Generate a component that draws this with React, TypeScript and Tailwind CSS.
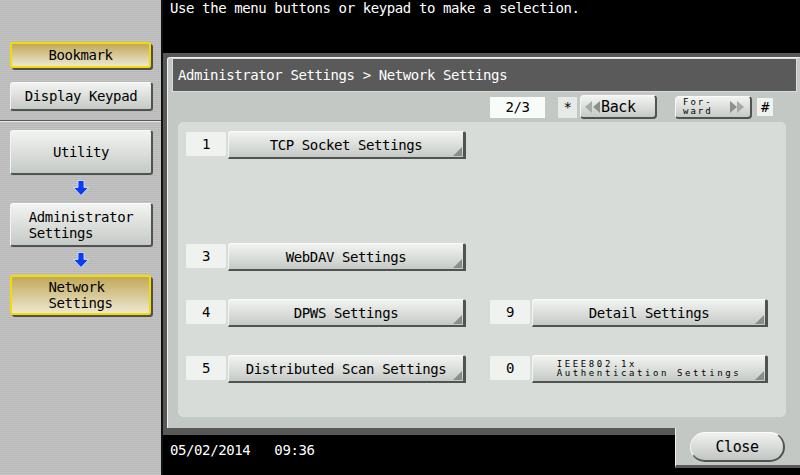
import React from "react";

const F = "font-['DejaVu_Sans_Mono',monospace]";

function DownArrow() {
  return (
    <svg width="16" height="16" viewBox="0 0 16 16">
      <path d="M5 0.5h6v7h4.5L8 15.5 0.5 7.5H5z" fill="#0a3cf0" stroke="#dfe8ff" strokeWidth="0.8" />
    </svg>
  );
}

function Corner() {
  return (
    <svg className="absolute right-[1px] bottom-[1px]" width="9" height="9" viewBox="0 0 9 9">
      <polygon points="9,0 9,9 0,9" fill="#8a8e8a" />
    </svg>
  );
}

const grayBtn =
  "bg-linear-to-b from-[#f2f4f2] to-[#c6cac6] border-t border-l border-t-[#fafafa] border-l-[#f4f4f4] border-r-2 border-b-2 border-r-[#505450] border-b-[#505450]";
const yellowBtn =
  "bg-linear-to-b from-[#c2a858] to-[#ece8d0] border-2 border-[#f4dc00] shadow-[2px_2px_0_#505050]";

function Sidebar() {
  return (
    <div className="w-[163px] h-full flex flex-col border-r-2 border-[#111111] bg-[repeating-linear-gradient(180deg,#c4c4c4_0px,#c4c4c4_1px,#b8b8b8_1px,#b8b8b8_2px)]">
      <div className="pt-[42px] pl-[10px] flex flex-col">
        <div className={`w-[141px] h-[26px] rounded-[3px] flex items-center justify-center ${yellowBtn}`}>Bookmark</div>
        <div className={`mt-[14px] w-[143px] h-[29px] rounded-[3px] flex items-center justify-center ${grayBtn}`}>Display Keypad</div>
      </div>
      <div className="mt-[9px] h-[1px] bg-[#5a5a5a]" />
      <div className="h-[1px] bg-[#e4e4e4]" />
      <div className="pl-[10px] flex flex-col">
        <div className={`mt-[8px] w-[143px] h-[45px] rounded-[3px] flex items-center justify-center ${grayBtn}`}>Utility</div>
        <div className="mt-[5px] w-[141px] h-[16px] flex justify-center"><DownArrow /></div>
        <div className={`mt-[7px] w-[143px] h-[44px] rounded-[3px] flex items-center justify-center ${grayBtn}`}>
          <div className="text-left">Administrator<br />Settings</div>
        </div>
        <div className="mt-[5px] w-[141px] h-[16px] flex justify-center"><DownArrow /></div>
        <div className={`mt-[7px] w-[141px] h-[40px] rounded-[3px] flex items-center justify-center ${yellowBtn}`}>
          <div className="text-left">Network<br />Settings</div>
        </div>
      </div>
    </div>
  );
}

function Item({ n, label, w, small }: { n: string; label?: string; w: number; small?: boolean }) {
  return (
    <div className="flex gap-[2px]" style={{ width: w }}>
      <div className="mt-[1px] w-[40px] h-[24px] rounded-[2px] bg-[#f0f2f0] flex items-center justify-center">{n}</div>
      <div className={`relative flex-1 h-[28px] rounded-tr-[3px] rounded-tl-[2px] flex items-center justify-center ${grayBtn} border-r-[3px]`}>
        {small ? (
          <div className="text-left text-[9px] leading-[9px] tracking-[2.6px]">IEEE802.1x<br />Authentication Settings</div>
        ) : (
          label
        )}
        <Corner />
      </div>
    </div>
  );
}

function Row({ children }: { children?: React.ReactNode }) {
  return <div className="h-[28px] flex gap-[24px]">{children}</div>;
}

export default function App() {
  return (
    <div className={`w-[800px] h-[475px] bg-black flex overflow-hidden text-black ${F} text-[14px] leading-[16px] tracking-[-0.4px]`}>
      <Sidebar />
      <div className="w-[637px] flex flex-col">
        <div className="h-[53px] pl-[7px] text-white">Use the menu buttons or keypad to make a selection.</div>
        <div className="h-[375px] bg-[#585858] pl-[4px] pt-[4px] flex">
          <div className="flex-1 flex flex-col bg-[#c4c8c4] border-t border-l border-[#f2f2f2] rounded-tl-[3px]">
            <div className="ml-[4px] w-[625px] h-[34px] bg-[#5a5a5a] border border-[#dcdcdc] text-white flex items-center pl-[5px]">
              Administrator Settings &gt; Network Settings
            </div>
            <div className="h-[30px] flex items-center justify-end pr-[27px]">
              <div className="w-[55px] h-[21px] bg-[#f8fcf8] flex items-center justify-center mr-[13px]">2/3</div>
              <div className="w-[19px] h-[21px] bg-[#e6eae6] flex items-center justify-center mr-[3px]">*</div>
              <div className={`w-[77px] h-[24px] rounded-[4px] flex items-center pl-[4px] gap-[1px] mr-[18px] ${grayBtn}`}>
                <svg width="15" height="12" viewBox="0 0 15 12">
                  <polygon points="7,0 7,12 0,6" fill="#a4aca4" />
                  <polygon points="15,0 15,12 8,6" fill="#8a928a" />
                </svg>
                <span className="text-[15px]">Back</span>
              </div>
              <div className={`w-[77px] h-[23px] rounded-[4px] flex items-center justify-between pl-[7px] pr-[6px] mr-[5px] ${grayBtn}`}>
                <div className="text-[9px] leading-[9px] tracking-[2px]">For-<br />ward</div>
                <svg width="14" height="12" viewBox="0 0 14 12">
                  <polygon points="0,0 0,12 7,6" fill="#8a928a" />
                  <polygon points="7,0 7,12 14,6" fill="#a4aca4" />
                </svg>
              </div>
              <div className="w-[16px] h-[18px] bg-[#f0f2f0] flex items-center justify-center">#</div>
            </div>
            <div className="ml-[10px] w-[608px] h-[295px] rounded-[5px] bg-[#d8dcd8] pt-[9px] pl-[8px] flex flex-col gap-[28px]">
              <Row><Item n="1" label="TCP Socket Settings" w={280} /></Row>
              <Row />
              <Row><Item n="3" label="WebDAV Settings" w={280} /></Row>
              <Row>
                <Item n="4" label="DPWS Settings" w={280} />
                <Item n="9" label="Detail Settings" w={278} />
              </Row>
              <Row>
                <Item n="5" label="Distributed Scan Settings" w={280} />
                <Item n="0" w={278} small />
              </Row>
            </div>
          </div>
        </div>
        <div className="flex">
          <div className="w-[512px] flex flex-col">
            <div className="h-[7px] bg-[#585858]" />
            <div className="pt-[7px] pl-[7px] text-white whitespace-pre">05/02/2014   09:36</div>
          </div>
          <div className="w-[125px] h-[40px] bg-[#c4c8c4] border-l border-[#f0f0f0] border-b-[3px] border-b-[#585858] pl-[14px] pt-[4px]">
            <div className="w-[95px] h-[30px] rounded-full bg-linear-to-b from-[#f0f2f0] to-[#c2c6c2] border-t border-l border-t-[#fafafa] border-l-[#f4f4f4] border-r-2 border-b-2 border-r-[#505450] border-b-[#505450] flex items-center justify-center text-[15px]">
              Close
            </div>
          </div>
        </div>
      </div>
    </div>
  );
}
